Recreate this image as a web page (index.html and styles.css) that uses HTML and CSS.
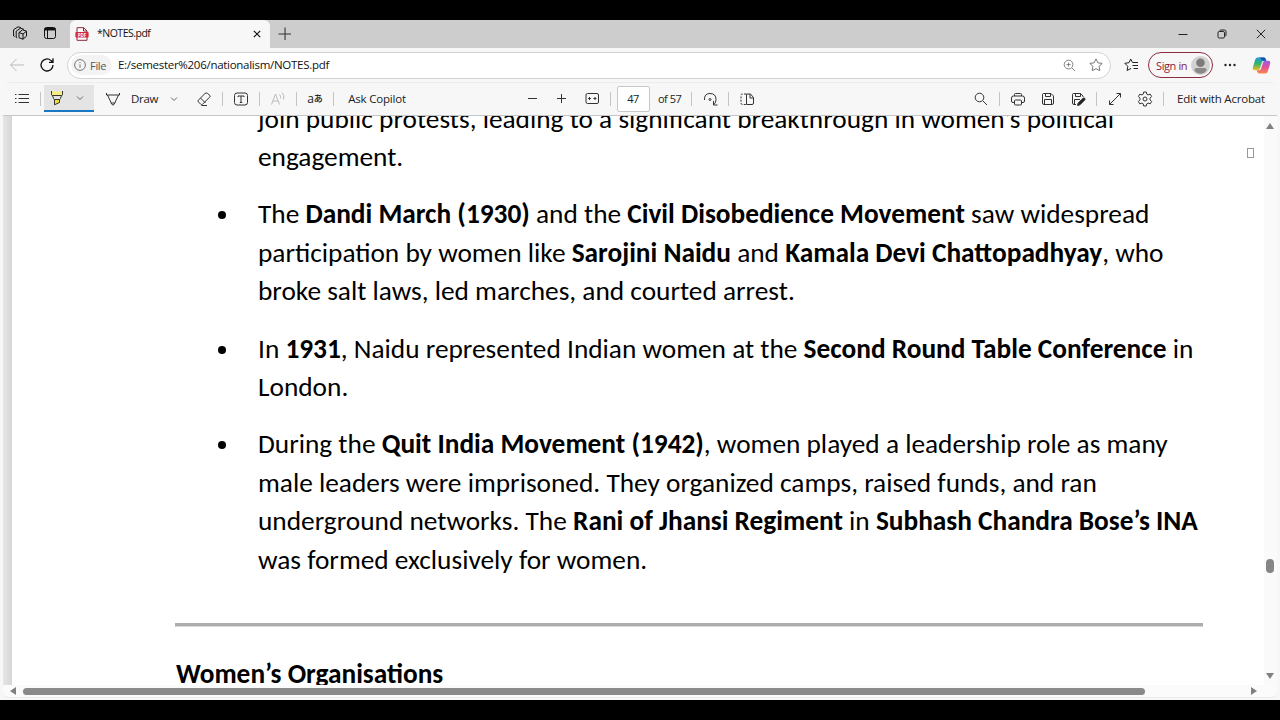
FILE: index.html
```
<!DOCTYPE html>
<html lang="en">
<head>
<meta charset="utf-8">
<meta name="viewport" content="width=device-width, initial-scale=1">
<title>NOTES.pdf</title>
<link rel="stylesheet" href="styles.css">
</head>
<body>

<div class="window">

  <!-- tab strip -->
  <div class="tabs">
    <div class="tabs-left">
      <svg class="ic dark" viewBox="0 0 16 16"><path d="M7 7.500l3.500-2.700 4 1.400v5L11 14.200l-4-1.500zM7 7.500l4 1.500 3.500-2.800M11 9v5.200M4.200 12.500V6.200l4.300-3 3.500 1.200M1.600 11V4.700L6 1.800l3 1M1.600 11l1 .5M4.200 12.500l1 .5"/></svg>
      <svg class="ic dark" viewBox="0 0 16 16"><rect x="2.500" y="2.500" width="11" height="11" rx="2"/><path d="M2.500 4.200h11" stroke-width="2.500"/><path d="M5.500 5v8.500"/></svg>
    </div>
    <div class="tab">
      <svg class="pdf-icon" viewBox="0 0 14 14"><path d="M2 .7h6.700L12 4v9.300H2z" fill="#fff" stroke="#8a2635"/><path d="M8.500.7V4H12" fill="none" stroke="#8a2635"/><rect x=".4" y="5" width="13.200" height="5.600" rx=".8" fill="#d5263f" stroke="none"/><text x="7" y="9.500" text-anchor="middle">PDF</text></svg>
      <span class="tab-title">*NOTES.pdf</span>
      <svg class="tab-close" viewBox="0 0 8 8"><path d="M.8.8l6.400 6.400M7.200.8.8 7.200"/></svg>
    </div>
    <svg class="new-tab" viewBox="0 0 12 12"><path d="M6.500.5v12M.5 6.500h12"/></svg>
    <div class="win-buttons">
      <svg viewBox="0 0 10 10"><path d="M.5 5.500h9"/></svg>
      <svg viewBox="0 0 10 10"><rect x="1" y="2.500" width="6.500" height="6.500" rx="1.300"/><path d="M3 2.200V1.800q0-.8.8-.8h3.700Q9 1 9 2.500v3.700q0 .8-.8.8"/></svg>
      <svg viewBox="0 0 10 10"><path d="M.8.8l8.400 8.400M9.200.8.8 9.200"/></svg>
    </div>
  </div>

  <!-- address bar -->
  <div class="nav">
    <svg class="ic faint" viewBox="0 0 16 16"><path d="M15 8H1.500M7.500 2 1.500 8l6 6"/></svg>
    <svg class="ic reload" viewBox="0 0 16 16"><path d="M14 8a6 6 0 1 1-1.900-4.400L14 5.300M14 1.300v4h-4"/></svg>
    <div class="address">
      <div class="chip">
        <svg viewBox="0 0 12 12"><circle cx="6" cy="6" r="5.400"/><path d="M6 5.300v3.500M6 3v1.200"/></svg>
        <span>File</span>
      </div>
      <span class="url">E:/semester%206/nationalism/NOTES.pdf</span>
      <svg class="zoom-icon" viewBox="0 0 14 14"><circle cx="6" cy="6" r="4.700"/><path d="M9.500 9.500 13 13M6 3.800v4.400M3.800 6h4.400"/></svg>
      <svg class="star" viewBox="0 0 14 14"><path d="M7 .9l1.900 3.900 4.300.6-3.100 3 .7 4.300L7 10.700l-3.800 2 .7-4.300-3.100-3 4.300-.6z"/></svg>
    </div>
    <svg class="fav" viewBox="0 0 15 14"><path d="M8.500 4.500 6.700 1 5 4.700l-4.200.6 3 3-.7 4.200 4-2.100M8.500 4.500H14M8.500 7.500H14M9.500 10.500H14"/></svg>
    <div class="signin">
      <span>Sign in</span>
      <svg viewBox="0 0 20 20"><circle cx="10" cy="10" r="10" fill="#d4d2d0"/><circle cx="10" cy="7" r="4.500" fill="#7d7b79"/><path d="M3.500 15q0-2.300 2.500-2.300h8q2.500 0 2.500 2.300Q14 18.700 10 18.700T3.500 15z" fill="#8b8987"/></svg>
    </div>
    <svg class="more" viewBox="0 0 12 4"><circle cx="1.500" cy="2" r="1.200"/><circle cx="6" cy="2" r="1.200"/><circle cx="10.500" cy="2" r="1.200"/></svg>
    <svg class="copilot" viewBox="0 0 20 20">
      <defs>
        <linearGradient id="c1" x1="0" y1="0" x2="0" y2="1"><stop offset="0" stop-color="#1b9de0"/><stop offset=".5" stop-color="#38b36b"/><stop offset="1" stop-color="#f0c020"/></linearGradient>
        <linearGradient id="c2" x1="0" y1="0" x2="0" y2="1"><stop offset="0" stop-color="#9a5be8"/><stop offset=".5" stop-color="#e0509a"/><stop offset="1" stop-color="#fb8a45"/></linearGradient>
      </defs>
      <path d="M6 1.500h6.500Q14 1.500 14.700 4L15 5h-2.500q-1.500 0-2 1.700L8.300 13.500Q7.700 15 6 15H3Q0 15 1 11.500L3.300 4Q4 1.500 6 1.500z" fill="url(#c1)"/>
      <path d="M7 1.500h5.500Q14 1.500 14.700 4L15 5h-3Q10 5 9.500 3.200 9 1.500 7 1.500z" fill="#174fb5"/>
      <path d="M14 18.500H7.500Q6 18.500 5.300 16L5 15h2.500q1.500 0 2-1.700l2.200-6.800Q12.300 5 14 5h3q3 0 2 3.500L16.700 16q-.7 2.500-2.700 2.500z" fill="url(#c2)"/>
    </svg>
  </div>

  <!-- pdf viewer -->
  <div class="viewer">
    <div class="toolbar">
      <div class="btn"><svg class="ic" viewBox="0 0 16 16"><path d="M4.500 3.500H15M4.500 7.500H15M4.500 11.500H15M1 3.500h1.500M1 7.500h1.500M1 11.500h1.500"/></svg></div>
      <i class="sep"></i>
      <div class="btn highlight">
        <svg class="ic" viewBox="0 0 16 16"><path d="M3 1.500v4h10v-4z" fill="#f6ee7c" stroke="none"/><path d="M5.500 9.500h5v3l-5 2.300z" fill="#f5df28"/><path d="M2.500 1v3.500q0 1 1 1h9q1 0 1-1V1M3.500 5.500l1 3q.3 1 1 1h5q.7 0 1-1l1-3"/></svg>
        <svg class="chev" viewBox="0 0 8 8"><path d="M1 2.500l3 3 3-3"/></svg>
      </div>
      <div class="btn draw">
        <svg class="ic" viewBox="0 0 16 16"><path d="M1.500 2v2h13V2M2.500 4l4.300 9.300q1.200 1.500 2.400 0L13.500 4M6.200 12h3.600"/></svg>
        <span>Draw</span>
        <svg class="chev" viewBox="0 0 8 8"><path d="M1 2.500l3 3 3-3"/></svg>
      </div>
      <div class="btn"><svg class="ic" viewBox="0 0 16 16"><path d="M9 2.500 2.300 9.200q-.8.800 0 1.600l2.500 2.500q.8.800 1.600 0L13.800 6q.8-.8 0-1.600l-2.300-2q-1.200-1-2.500.1zM4.500 7l5 5M5.500 14.500H11"/></svg></div>
      <i class="sep"></i>
      <div class="btn"><svg class="ic" viewBox="0 0 16 16"><rect x="1.500" y="2" width="13" height="12" rx="2.500"/><path d="M5 6V5h6v1M8 5v6.500M6.800 11.500h2.400"/></svg></div>
      <i class="sep"></i>
      <div class="btn"><svg class="ic faint" viewBox="0 0 16 16"><path d="M1.500 13.500 5.500 3l4 10.500M3 10h5M9.500 3.500q1.500 1.500 1.200 4M12 1.500q3 3 1.500 7"/></svg></div>
      <i class="sep"></i>
      <div class="btn translate"><span>a</span><span class="kana">あ</span></div>
      <i class="sep"></i>
      <div class="btn ask">Ask Copilot</div>

      <div class="center">
        <div class="btn"><svg class="ic" viewBox="0 0 16 16"><path d="M4 7.500h9"/></svg></div>
        <div class="btn"><svg class="ic" viewBox="0 0 16 16"><path d="M7.500 3v9M3 7.500h9"/></svg></div>
        <div class="btn"><svg class="ic" viewBox="0 0 16 16"><rect x="2" y="2.500" width="12.500" height="10" rx="1.500"/><path d="M4.500 7.500H7M6 6 4.500 7.500 6 9M9.500 7.500H12M10.500 6 12 7.500 10.500 9"/></svg></div>
        <i class="sep"></i>
        <div class="page-box">47</div>
        <span class="page-count">of 57</span>
        <i class="sep"></i>
        <div class="btn"><svg class="ic" viewBox="0 0 16 16"><path d="M2.500 9Q2 2.500 8 2.500q6 0 6 6 0 3-2 5M11.500 10v4h4"/><circle cx="8" cy="8.500" r="1"/></svg></div>
        <i class="sep"></i>
        <div class="btn"><svg class="ic" viewBox="0 0 16 16"><path d="M7.500 3v10.500H13q1.500 0 1.500-1.500V6.500L11.500 3zM11 3v4h3.500"/><path d="M7 3H3.500Q2 3 2 4.500V12q0 1.500 1.500 1.500H7" stroke-dasharray="2 1.300"/></svg></div>
      </div>

      <div class="right">
        <div class="btn"><svg class="ic" viewBox="0 0 16 16"><circle cx="6.500" cy="6.500" r="4.300"/><path d="M9.700 9.700l4.300 4.300"/></svg></div>
        <i class="sep"></i>
        <div class="btn"><svg class="ic" viewBox="0 0 16 16"><path d="M4.500 5V3.500q0-1 1-1h5q1 0 1 1V5M4 11.500H3q-1.500 0-1.500-1.500V7q0-2 2-2h9q2 0 2 2v3q0 1.500-1.500 1.500h-1"/><rect x="4.500" y="9" width="7" height="5" rx="1"/></svg></div>
        <div class="btn"><svg class="ic" viewBox="0 0 16 16"><path d="M3.500 2.500H11l2.500 2.500v7q0 1.500-1.500 1.500H4q-1.500 0-1.500-1.500V3.500q0-1 1-1zM5.500 2.500v3h5v-3M4.500 13.500v-5h7v5"/></svg></div>
        <div class="btn"><svg class="ic" viewBox="0 0 16 16"><path d="M13 6V5l-2.500-2.500h-7q-1 0-1 1V12q0 1.500 1.500 1.500h2M5.500 2.500v3h5v-3M4.500 13.500v-5H10"/><path d="M7.500 14.500l.7-2.500L13 7.300q1-.8 1.800 0 .7 1-.1 1.700L10 13.800z" fill="#222"/></svg></div>
        <i class="sep"></i>
        <div class="btn"><svg class="ic" viewBox="0 0 16 16"><path d="M2.500 13.500l11-11M9.500 2.500h4v4M6.500 13.500h-4v-4"/></svg></div>
        <div class="btn"><svg class="ic" viewBox="0 0 16 16"><path d="M6.700 1h2.600l.5 2.200 1.300.7 2.200-.7 1.300 2.300-1.600 1.600v1.800l1.600 1.600-1.300 2.300-2.200-.7-1.300.7-.5 2.200H6.700l-.5-2.200-1.300-.7-2.200.7-1.300-2.300L3 8.900V7.100L1.400 5.500l1.300-2.300 2.200.7 1.300-.7z" stroke-linejoin="round"/><circle cx="8" cy="8" r="2"/></svg></div>
        <i class="sep"></i>
        <span class="acrobat">Edit with Acrobat</span>
      </div>
    </div>

    <div class="content">
      <div class="page">
        <p>join public protests, leading to a significant breakthrough in women’s political<br>
        engagement.</p>
        <ul>
          <li>The <b>Dandi March (1930)</b> and the <b>Civil Disobedience Movement</b> saw widespread<br>
          participation by women like <b>Sarojini Naidu</b> and <b>Kamala Devi Chattopadhyay</b>, who<br>
          broke salt laws, led marches, and courted arrest.</li>
          <li>In <b>1931</b>, Naidu represented Indian women at the <b>Second Round Table Conference</b> in<br>
          London.</li>
          <li>During the <b>Quit India Movement (1942)</b>, women played a leadership role as many<br>
          male leaders were imprisoned. They organized camps, raised funds, and ran<br>
          underground networks. The <b>Rani of Jhansi Regiment</b> in <b>Subhash Chandra Bose’s INA</b><br>
          was formed exclusively for women.</li>
        </ul>
        <hr>
        <h2>Women’s Organisations</h2>
      </div>
      <div class="side-mark"></div>
      <div class="vscroll">
        <svg viewBox="0 0 8 6"><path d="M4 0l4 6H0z"/></svg>
        <div class="vthumb"></div>
        <svg viewBox="0 0 8 6"><path d="M4 6l4-6H0z"/></svg>
      </div>
    </div>

    <div class="hscroll">
      <svg viewBox="0 0 6 8"><path d="M0 4l6-4v8z"/></svg>
      <div class="hthumb"></div>
      <svg viewBox="0 0 6 8"><path d="M6 4L0 0v8z"/></svg>
    </div>
  </div>

</div>

</body>
</html>
```
FILE: styles.css
```
* { box-sizing: border-box; }

body {
    margin: 0;
    padding: 20px 0;
    height: 720px;
    overflow: hidden;
    background: #000;
    color: #222;
    font-family: "Segoe UI", "Open Sans", sans-serif;
    font-size: 11.5px;
}

svg {
    display: block;
    flex: none;
    fill: none;
    stroke: #333;
}

.ic { width: 16px; height: 16px; }
.dark { stroke: #111; }
.faint { stroke: #bbb; }

.window {
    height: 680px;
    background: #f7f7f7;
    display: flex;
    flex-direction: column;
}

/* Tab strip */
.tabs {
    height: 28px;
    background: #cdcdcd;
    display: flex;
    align-items: center;
}

.tabs-left {
    width: 70px;
    height: 28px;
    padding: 0 0 2px 12px;
    display: flex;
    align-items: center;
    gap: 14px;
}

.tab {
    width: 200px;
    height: 28px;
    padding: 0 9px 1px 5px;
    background: #f7f7f7;
    border-radius: 6px 6px 0 0;
    display: flex;
    align-items: center;
}

.pdf-icon { width: 14px; height: 14px; }
.pdf-icon text { font-size: 4.5px; font-weight: bold; fill: #fff; stroke: none; }
.tab-title { margin: 0 0 1px 8px; color: #111; font-size: 10.5px; letter-spacing: -0.5px; }
.tab-close { width: 8px; height: 8px; margin-left: auto; stroke: #111; stroke-width: 1.2; }
.new-tab { width: 13px; height: 13px; margin: 0 0 1px 8px; }

.win-buttons {
    margin-left: auto;
    padding-right: 14px;
    display: flex;
    gap: 29px;
}

.win-buttons svg { width: 10px; height: 10px; stroke: #222; }

/* Address bar */
.nav {
    height: 34px;
    padding: 0 0 0 9px;
    display: flex;
    align-items: center;
}

.reload { margin-left: 14px; stroke: #111; stroke-width: 1.3; }

.address {
    width: 1044px;
    height: 27px;
    flex: none;
    margin-left: 12px;
    padding: 0 7px 0 3px;
    background: #fff;
    border: 1px solid #d2d2d2;
    border-radius: 14px;
    display: flex;
    align-items: center;
}

.chip {
    width: 41px;
    height: 20px;
    padding-left: 3px;
    background: #f3f3f3;
    border-radius: 10px;
    display: flex;
    align-items: center;
    gap: 4px;
    color: #555;
    font-size: 11px;
    letter-spacing: -0.3px;
}

.chip svg { width: 12px; height: 12px; stroke: #777; }
.url { margin: 0 0 1px 6px; color: #111; letter-spacing: -0.28px; }
.zoom-icon { width: 13px; height: 13px; margin-left: auto; stroke: #777; }
.star { width: 14px; height: 14px; margin-left: 13px; stroke: #777; }
.fav { width: 15px; height: 14px; margin-left: 13px; stroke: #222; }

.signin {
    width: 65px;
    height: 26px;
    flex: none;
    margin-left: 9px;
    padding: 0 2px 0 7px;
    border: 1px solid #8c2c41;
    border-radius: 13px;
    display: flex;
    align-items: center;
    justify-content: space-between;
    color: #8c1c37;
    font-size: 11px;
    white-space: nowrap;
    letter-spacing: -0.4px;
}

.signin svg { width: 19px; height: 19px; stroke: none; }
.more { width: 12px; height: 4px; margin-left: 11px; fill: #222; stroke: none; }
.copilot { width: 19px; height: 19px; margin-left: 16px; stroke: none; }

/* PDF viewer */
.viewer {
    height: 616px;
    margin: 0 3px;
    background: #fbfbfb;
    border: 1px solid #ececec;
    border-width: 1px 0;
    border-radius: 6px;
    overflow: hidden;
}

.toolbar {
    height: 33px;
    padding: 0 0 1px 4px;
    background: #f7f7f7;
    border-bottom: 1px solid #c6c6c6;
    display: flex;
    align-items: center;
    white-space: nowrap;
}

.btn {
    width: 30px;
    height: 27px;
    flex: none;
    display: flex;
    align-items: center;
    justify-content: center;
}

.sep {
    width: 1px;
    height: 14px;
    margin: 0 3px;
    flex: none;
    background: #c4c4c4;
}

.chev { width: 8px; height: 8px; stroke: #666; }

.highlight {
    width: 50px;
    padding-left: 5px;
    gap: 11px;
    justify-content: flex-start;
    background: #e4e4e4;
    border-bottom: 2px solid #1a78c2;
}

.draw {
    width: 91px;
    margin-left: 4px;
    padding-left: 7px;
    justify-content: flex-start;
}

.draw span { width: 26px; margin: 0 13px 0 10px; letter-spacing: -0.3px; }

.translate { font-size: 12px; }

.kana {
    font-family: "Noto Sans CJK JP", sans-serif;
    font-size: 9px;
    font-weight: 500;
}

.ask { width: 80px; letter-spacing: -0.2px; }

.center {
    margin-left: 100px;
    display: flex;
    align-items: center;
}

.page-box {
    width: 33px;
    height: 26px;
    margin-left: 3px;
    padding-right: 1px;
    background: #fff;
    border: 1px solid #c8c8c8;
    border-radius: 2px;
    line-height: 24px;
    text-align: center;
    font-size: 11px;
    letter-spacing: -0.5px;
}

.page-count { width: 30px; margin-left: 8px; font-size: 11px; letter-spacing: -0.5px; }

.right {
    margin-left: auto;
    padding-right: 12px;
    display: flex;
    align-items: center;
}

.acrobat { width: 88px; margin-left: 10px; letter-spacing: -0.2px; }

/* Document area */
.content {
    position: relative;
    height: 569px;
    padding-left: 9px;
    background: linear-gradient(to right, #e6e6e6, #d6d6d6 9px);
    display: flex;
    overflow: hidden;
}

.page {
    width: 1252px;
    height: 569px;
    padding-left: 164px;
    background: #fff;
    color: #000;
    font-family: Calibri, Carlito, Lato, sans-serif;
    font-size: 27.33px;
    line-height: 38.6px;
    white-space: nowrap;
    overflow: hidden;
}

.page p { margin: -16.4px 0 18.5px 82px; }

.page ul {
    margin: 0;
    padding: 0;
    list-style: none;
}

.page li {
    position: relative;
    margin-bottom: 18.5px;
    padding-left: 82px;
}

.page li::before {
    content: "";
    position: absolute;
    left: 42px;
    top: 16px;
    width: 8px;
    height: 8px;
    border-radius: 50%;
    background: #000;
}

.page hr {
    width: 1028px;
    height: 4px;
    margin: 43.6px 0 0 -1px;
    border: none;
    border-top: 3px solid #adadad;
    background: #d9d9d9;
}

.page h2 {
    margin: 27.6px 0 0;
    font-size: 27.33px;
}

.side-mark {
    position: absolute;
    left: 1244px;
    top: 32px;
    width: 7px;
    height: 10px;
    border: 1px solid #999;
}

/* Scroll bars */
.vscroll {
    width: 13px;
    padding: 7px 1px 6px 0;
    background: #fafafa;
    display: flex;
    flex-direction: column;
    align-items: center;
}

.vscroll svg, .hscroll svg {
    fill: #808080;
    stroke: none;
}

.vscroll svg { width: 8px; height: 6px; }

.vthumb {
    width: 8px;
    height: 14px;
    margin: 430px 0 auto;
    border-radius: 4px;
    background: #858585;
}

.hscroll {
    height: 12px;
    padding: 0 20px 0 7px;
    display: flex;
    align-items: center;
}

.hscroll svg { width: 6px; height: 8px; }

.hthumb {
    width: 1122px;
    height: 7px;
    margin: 0 auto 0 7px;
    border-radius: 4px;
    background: #8a8a8a;
}
```
